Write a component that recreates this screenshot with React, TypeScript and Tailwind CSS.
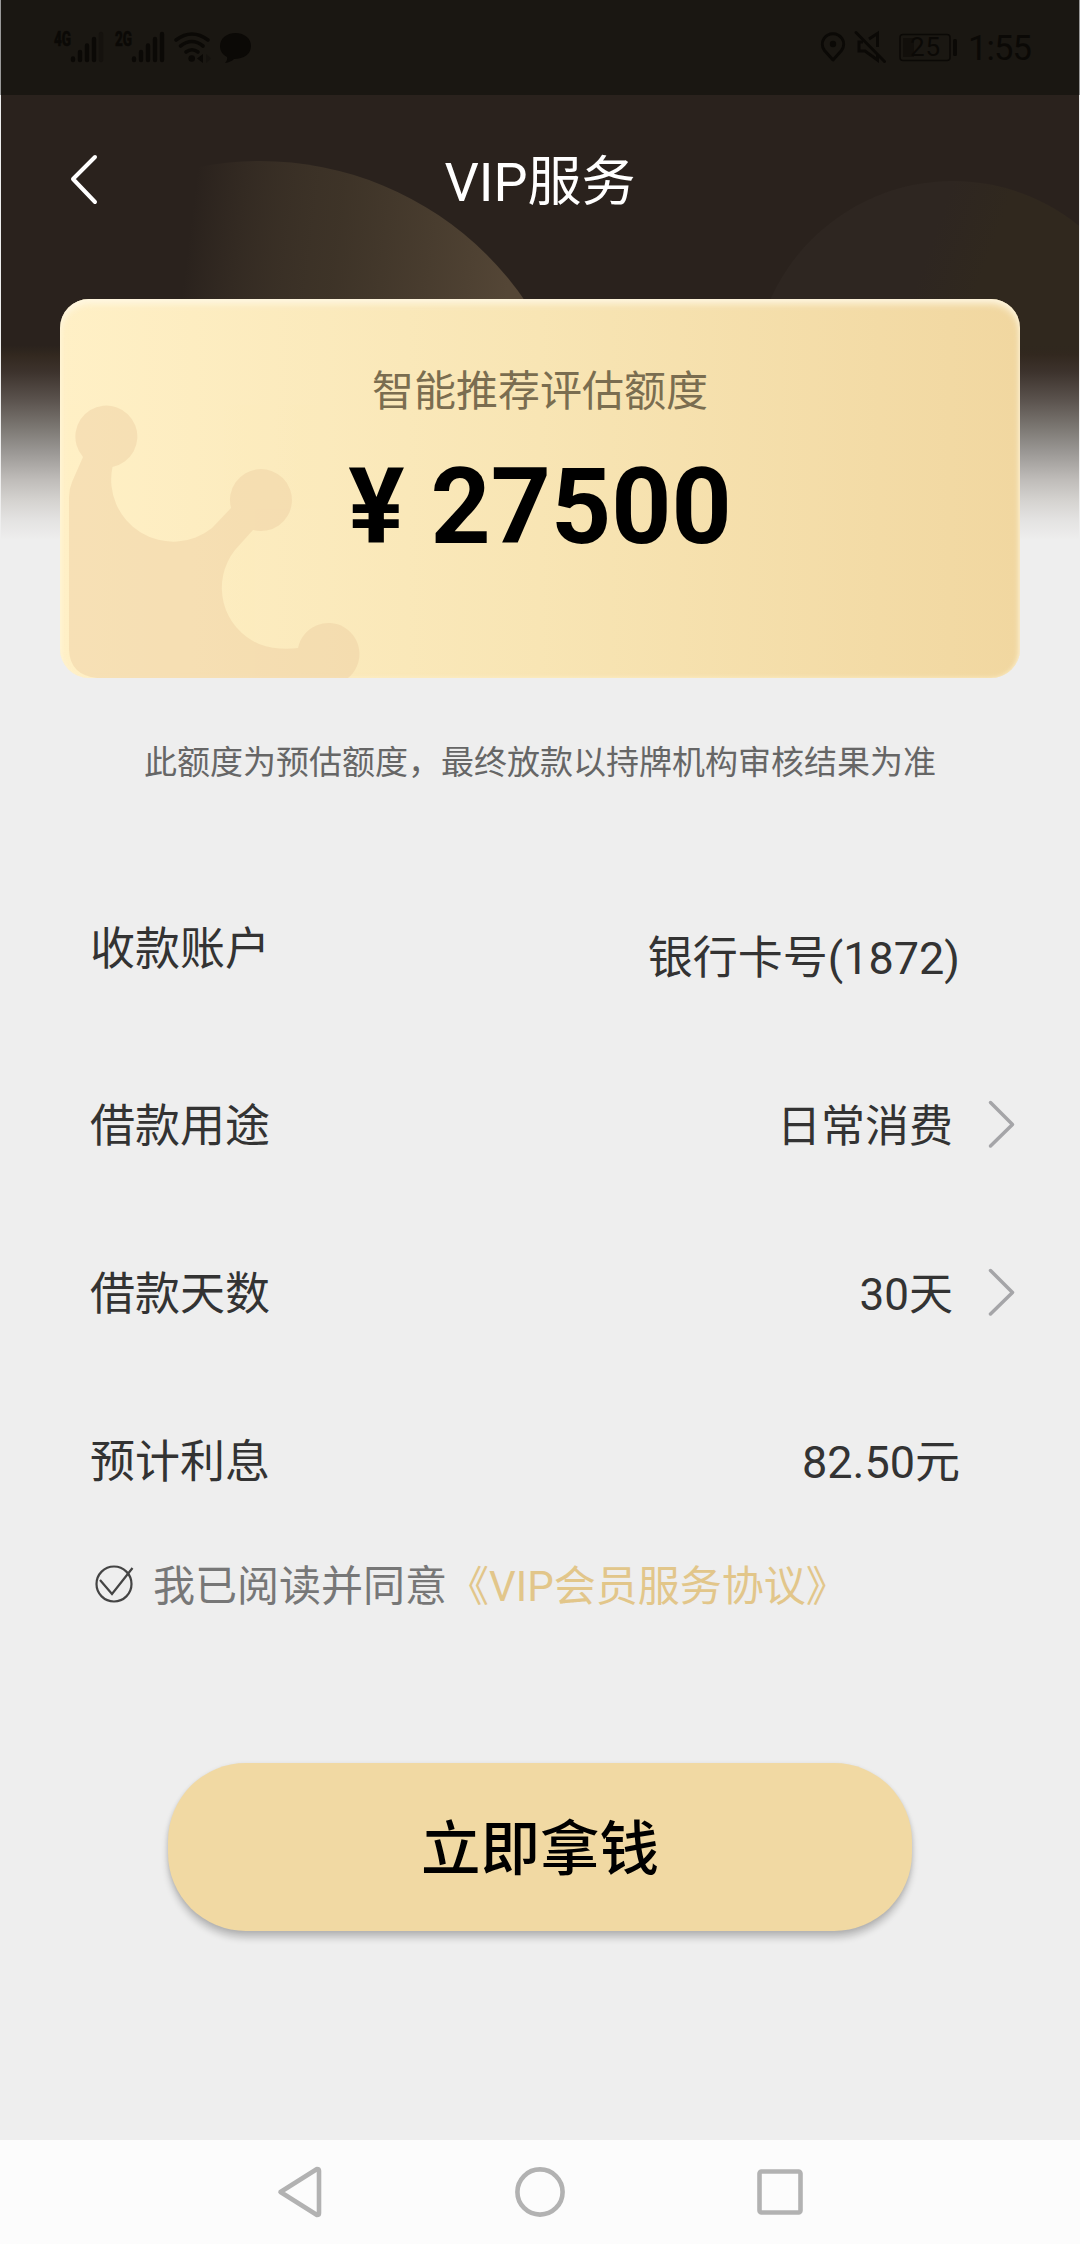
import type { ReactNode } from "react";

const font = "font-[Roboto,'Noto_Sans_CJK_SC',sans-serif]";

function StatusBar() {
  return (
    <div className="relative h-[95px] bg-[#1a1712] flex items-center justify-between">
      {/* Señal, wifi y mensajes */}
      <svg width="270" height="95" viewBox="0 0 270 95" fill="#0b0906">
        <text x="54" y="45.5" fontSize="19.5" fontWeight="800" textLength="17" lengthAdjust="spacingAndGlyphs" stroke="#0b0906" strokeWidth="0.5">4G</text>
        <g stroke="#0b0906" strokeWidth="4.4" strokeLinecap="round">
          <path d="M73 58.5V60M80 52V60M87 45.5V60M94 39V60" />
          <path d="M101 34V60" stroke="#15120e" />
          <path d="M134 58.5V60M141 52V60M148 45.5V60M155 39V60M162 34V60" />
        </g>
        <text x="115" y="45.5" fontSize="19.5" fontWeight="800" textLength="17" lengthAdjust="spacingAndGlyphs" stroke="#0b0906" strokeWidth="0.5">2G</text>
        <g fill="none" stroke="#0b0906" strokeWidth="3.6" strokeLinecap="round">
          <path d="M176 40Q192 28 208 40" />
          <path d="M180.5 46Q192 37 203 46" />
          <path d="M186 52Q192 47.5 198 52" />
        </g>
        <circle cx="191.7" cy="58.5" r="3.3" />
        <path d="M203 54V63L197 58.5Z" />
        <path d="M206 54V63L211 58.5Z" fill="#15120e" />
        <path d="M235.5 33C244.5 33 251 38.5 251 46C251 54 244 59 234 59C232 61 229 62.5 225 63C227 61 227.5 59 227 57C222.5 54.5 220 51 220 46C220 38.5 226.5 33 235.5 33Z" />
      </svg>

      {/* Ubicación, silencio, batería y hora */}
      <svg width="270" height="95" viewBox="810 0 270 95" fill="none" stroke="#0b0906">
        <path d="M833 60L824.5 50.5C821.5 46.5 822 41.5 824 38.5C828.5 32 837.5 32 842 38.5C844 41.5 844.5 46.5 841.5 50.5Z" strokeWidth="3" strokeLinejoin="round" />
        <circle cx="833" cy="44" r="3.2" fill="#0b0906" stroke="none" />
        <path d="M856 32.5L884.5 61.5" strokeWidth="3" strokeLinecap="round" />
        <path d="M869 39L877.5 33.5V47M863 42H859V51H865L877.5 60V55" strokeWidth="3" />
        <rect x="900" y="34.5" width="50" height="26" rx="3" strokeWidth="1.5" />
        <rect x="903" y="38" width="11" height="19" fill="#120f0b" stroke="none" />
        <rect x="953" y="39" width="4" height="17" rx="1.5" fill="#0b0906" stroke="none" />
        <text x="910" y="56" fontSize="26" textLength="30" fill="#0b0906" stroke="none">25</text>
        <text x="968" y="60" fontSize="34.5" textLength="64" fill="#0b0906" stroke="none">1:55</text>
      </svg>
    </div>
  );
}

// Fondo oscuro con los dos círculos que se desvanece hacia el gris
function HeaderBackground() {
  return (
    <svg className="absolute left-px top-[95px]" width="1078" height="450" viewBox="1 95 1078 450">
      <defs>
        <linearGradient id="gold" gradientUnits="userSpaceOnUse" x1="190" y1="230" x2="510" y2="270">
          <stop offset="0" stopColor="#544735" stopOpacity="0" />
          <stop offset="0.45" stopColor="#44392b" stopOpacity="0.75" />
          <stop offset="1" stopColor="#544636" />
        </linearGradient>
        <linearGradient id="shade" gradientUnits="userSpaceOnUse" x1="900" y1="240" x2="1040" y2="290">
          <stop offset="0.2" stopColor="#2e2621" />
          <stop offset="0.6" stopColor="#30281e" />
        </linearGradient>
        <linearGradient id="fade" gradientUnits="userSpaceOnUse" x1="0" y1="345" x2="0" y2="540">
          <stop offset="0" stopColor="#2f271e" stopOpacity="0" />
          <stop offset="0.05" stopColor="#32281f" />
          <stop offset="0.14" stopColor="#3d332d" />
          <stop offset="0.28" stopColor="#5a524d" />
          <stop offset="0.43" stopColor="#7d7974" />
          <stop offset="0.54" stopColor="#989592" />
          <stop offset="0.69" stopColor="#bfbcb9" />
          <stop offset="0.8" stopColor="#d5d3d0" />
          <stop offset="0.9" stopColor="#e4e3e2" />
          <stop offset="1" stopColor="#eeeeee" />
        </linearGradient>
      </defs>
      <rect x="1" y="95" width="1078" height="300" fill="#2a221d" />
      <circle cx="260" cy="482" r="321" fill="url(#gold)" />
      <circle cx="953" cy="381" r="200" fill="url(#shade)" />
      <rect x="1" y="345" width="1078" height="200" fill="url(#fade)" />
      <rect x="1" y="540" width="1078" height="5" fill="#eee" />
    </svg>
  );
}

function Crown() {
  return (
    <svg className="absolute inset-0" width="960" height="379" viewBox="60 299 960 379" fill="#edcda1" opacity="0.43">
      <path d="M83 457L72 482Q69 489 69 497V650Q70 675 97 678H348A31 31 0 1 0 298 648C287 649.5 272 649 259 644A61 61 0 0 1 235 550L253 530A31 31 0 1 0 231 508L212 528A62 62 0 0 1 112.5 467A31 31 0 1 0 83 457Z" />
    </svg>
  );
}

function Arrow() {
  return (
    <svg className="mb-[3px]" width="28" height="50" viewBox="0 0 28 50" fill="none" stroke="#a5a5a8" strokeWidth="3.5" strokeLinecap="round" strokeLinejoin="round">
      <path d="M2.5 3.5L24.5 25.5L2.5 47" />
    </svg>
  );
}

function Row({ label, className, children }: { label: string; className: string; children: ReactNode }) {
  return (
    <div className={`flex items-center justify-between pl-[90px] text-[45px] leading-[66px] text-[#333] ${className}`}>
      <span className="pt-[4px]">{label}</span>
      <div className="flex items-center">{children}</div>
    </div>
  );
}

export default function App() {
  return (
    <div className={`relative flex h-[2244px] w-[1080px] flex-col overflow-hidden bg-[#eee] ${font}`}>
      <HeaderBackground />
      <StatusBar />

      {/* Título */}
      <header className="relative grid h-[204px] grid-cols-3 items-start pt-[48px] text-white">
        <svg className="ml-[68px] mt-[10px]" width="34" height="54" viewBox="0 0 34 54" fill="none" stroke="#fff" strokeWidth="4" strokeLinecap="round" strokeLinejoin="round">
          <path d="M27 4L5 26L27 49" />
        </svg>
        <h1 className="pt-[1px] text-center text-[54px] leading-[78px]">VIP服务</h1>
      </header>

      {/* Tarjeta del monto */}
      <section className="relative mx-[60px] h-[379px] overflow-hidden rounded-[29px] bg-linear-to-r from-[#fff0c6] via-[#f8e5b4] to-[#f1d7a0] pt-[62px] text-center shadow-[inset_0_5px_7px_rgba(255,250,235,0.75),inset_0_0_5px_rgba(255,240,200,0.8)]">
        <Crown />
        <p className="relative text-[42px] leading-[62px] text-[#7a6d50]">智能推荐评估额度</p>
        <p className="relative mt-[23px] text-[105px] font-bold leading-[124px] text-black">¥ 27500</p>
      </section>

      <p className="mt-[61px] text-center text-[33px] leading-[48px] text-[#666]">此额度为预估额度，最终放款以持牌机构审核结果为准</p>

      <div className="mt-[128px]">
        <Row label="收款账户" className="h-[66px] pr-[120px]">
          <span className="mt-[21px]">银行卡号(1872)</span>
        </Row>
        <Row label="借款用途" className="mt-[111px] h-[66px] pr-[64px]">
          <span className="mr-[35px] pt-[4px] text-[44px]">日常消费</span>
          <Arrow />
        </Row>
        <Row label="借款天数" className="mt-[102px] h-[66px] pr-[64px]">
          <span className="mr-[35px] pt-[4px] text-[44px]">30天</span>
          <Arrow />
        </Row>
        <Row label="预计利息" className="mt-[102px] h-[66px] pr-[120px]">
          <span className="pt-[4px]">82.50元</span>
        </Row>
      </div>

      {/* Acuerdo */}
      <div className="mt-[61px] flex h-[62px] items-center pl-[94px] text-[42px] leading-[62px] text-[#777]">
        <svg className="mb-[3px] mr-[18px]" width="41" height="42" viewBox="0 0 41 42" fill="none" stroke="#444" strokeWidth="2.2">
          <circle cx="20" cy="20" r="17.5" />
          <path d="M6 16L18 30L38.5 4" />
        </svg>
        <span className="pt-[2px]">我已阅读并同意</span>
        <span className="pt-[2px] text-[#e2c68a]">《VIP会员服务协议》</span>
      </div>

      <button className="mx-auto mt-[146px] h-[168px] w-[744px] rounded-[78px] bg-[#f1d9a3] pt-[8px] text-[59.5px] font-medium text-black shadow-[0_7px_7px_rgba(0,0,0,0.2),0_1px_4px_rgba(0,0,0,0.1)]">
        立即拿钱
      </button>

      {/* Navegación del sistema */}
      <nav className="mt-auto flex h-[104px] items-center bg-[#fcfcfc] pl-[276px]">
        <svg width="530" height="54" viewBox="276 2165 530 54" fill="none" stroke="#b2b2b2" strokeWidth="4.6" strokeLinejoin="round">
          <path d="M280.5 2192L317 2169Q319 2169 319 2171V2213Q319 2215 317 2215L280.5 2192Z" />
          <circle cx="540" cy="2192" r="22.6" />
          <rect x="759.5" y="2171.5" width="41" height="41" rx="2" />
        </svg>
      </nav>

      {/* Bordes claros de la pantalla */}
      <div className="absolute left-0 top-0 h-[95px] w-px bg-[#999]" />
      <div className="absolute right-0 top-0 h-[95px] w-px bg-[#999]" />
    </div>
  );
}
